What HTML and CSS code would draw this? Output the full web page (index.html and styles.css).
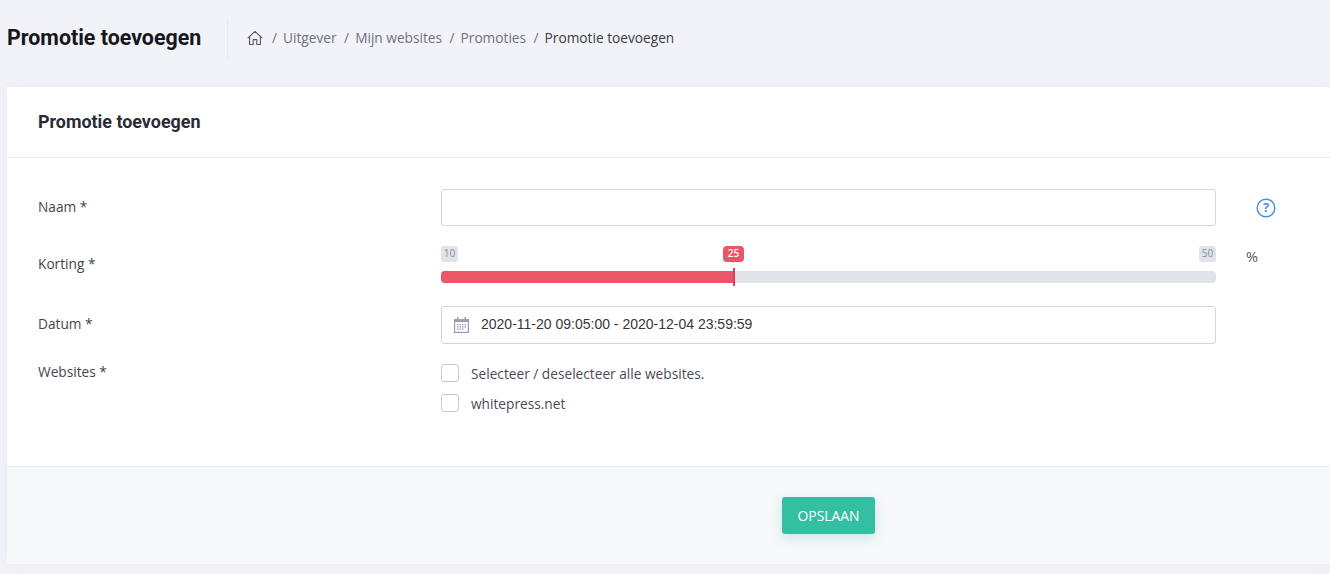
FILE: index.html
```html
<!DOCTYPE html>
<html lang="nl">
<head>
<meta charset="utf-8">
<title>Promotie toevoegen</title>
<link rel="stylesheet" href="styles.css">
</head>
<body>
<header class="subheader">
  <h1 class="page-title">Promotie toevoegen</h1>
  <nav class="crumbs">
    <svg class="home" viewBox="0 0 16 16" width="16" height="16" fill="none" stroke="#55586a" stroke-width="1.100" stroke-linejoin="round"><path d="M.8 8.200 8 1.400l7.200 6.800M2.600 6.800v7.700h3.600V9.600h3.600v4.900h3.600V6.800"/></svg>
    <span class="sep">/</span><a>Uitgever</a>
    <span class="sep">/</span><a>Mijn websites</a>
    <span class="sep">/</span><a>Promoties</a>
    <span class="sep">/</span><span class="current">Promotie toevoegen</span>
  </nav>
</header>
<main class="card">
  <div class="card-head"><h2>Promotie toevoegen</h2></div>
  <form class="card-body">
    <div class="row row-name">
      <label>Naam *</label>
      <input class="field" type="text">
      <svg class="help" viewBox="0 0 20 20" width="20" height="20" fill="none"><circle cx="10" cy="10" r="8.800" stroke="#4a90e2" stroke-width="1.500"/><text x="10" y="14.400" text-anchor="middle" class="help-q">?</text></svg>
    </div>
    <div class="row row-slider">
      <label>Korting *</label>
      <div class="slider">
        <div class="ticks"><span class="tick">10</span><span class="tick">50</span></div>
        <span class="bubble">25</span>
        <div class="track"><div class="fill" style="width:293px"></div></div>
      </div>
      <span class="unit">%</span>
    </div>
    <div class="row row-date">
      <label>Datum *</label>
      <div class="field date">
        <svg viewBox="0 0 15 16" width="15" height="16"><path fill="#9a9bb4" d="M0 2h15v14H0z"/><path fill="#fff" d="M1.200 5h12.600v9.800H1.200z"/><path fill="#9a9bb4" d="M3 0h1.500v3H3zM10.500 0H12v3h-1.500zM3 7h1.500v1.200H3zM5.500 7H7v1.200H5.500zM8 7h1.500v1.200H8zM10.500 7H12v1.200h-1.500zM3 9.300h1.500v1.200H3zM5.500 9.300H7v1.200H5.500zM8 9.300h1.500v1.200H8zM10.500 9.300H12v1.200h-1.500zM3 11.600h1.500v1.200H3zM5.500 11.600H7v1.200H5.500zM8 11.600h1.500v1.200H8z"/></svg>
        <span class="date-text">2020-11-20 09:05:00 - 2020-12-04 23:59:59</span>
      </div>
    </div>
    <div class="row row-sites">
      <label>Websites *</label>
      <div class="checks">
        <div class="check"><span class="box"></span>Selecteer / deselecteer alle websites.</div>
        <div class="check"><span class="box"></span>whitepress.net</div>
      </div>
    </div>
  </form>
  <footer class="card-foot"><button type="button" class="save">OPSLAAN</button></footer>
</main>
</body>
</html>
```
FILE: styles.css
```css
* { box-sizing: border-box; }
html, body { height: 100%; }
body {
  margin: 0;
  padding: 0 0 0 7px;
  background: #f2f3f8;
  font-family: "Open Sans", sans-serif;
  font-size: 13.700px;
  color: #3f4047;
  overflow: hidden;
}
.subheader {
  height: 87px;
  padding-bottom: 11px;
  display: flex;
  align-items: center;
}
.page-title {
  margin: 0;
  width: 221px;
  height: 40px;
  border-right: 1px solid #e7e8ef;
  font: 700 21.400px/40px Roboto, sans-serif;
  color: #16171d;
}
.crumbs {
  display: flex;
  align-items: center;
  margin-left: 19px;
  font-size: 13.700px;
  color: #6f717d;
}
.crumbs > span, .crumbs > a { position: relative; top: -1px; }
.home { margin-right: 8px; }
.sep { margin: 0 6px 0 1px; }
.crumbs a { margin-right: 6.500px; }
.current { color: #3a3b42; }
.card {
  height: 477px;
  background: #fff;
  box-shadow: 0 0 13px rgba(82, 63, 105, .05);
  display: flex;
  flex-direction: column;
}
.card-head {
  height: 71px;
  padding-left: 31px;
  border-bottom: 1px solid #ebedf2;
  display: flex;
  align-items: center;
}
.card-head h2 {
  margin: 0;
  font: 700 17.900px/20px Roboto, sans-serif;
  color: #2a2b33;
}
.card-body {
  flex: 1;
  padding: 31px 0 0 31px;
}
.row {
  display: grid;
  grid-template-columns: 403px 775px auto;
}
.row label { color: #44454d; }
.field {
  display: block;
  width: 775px;
  border: 1px solid #d5d6dc;
  border-radius: 3px;
  background: #fff;
  outline: none;
}
.row-name { height: 37px; align-items: center; }
.row-name label { margin-top: -3px; }
.row-name .field { height: 37px; }
.help { margin-left: 40px; margin-top: 1px; }
.help-q { font: 700 13px "Open Sans", sans-serif; fill: #4a90e2; }
.row-slider { height: 60px; margin-top: 20px; }
.row-slider label { padding-top: 8px; }
.slider { position: relative; }
.ticks { display: flex; justify-content: space-between; height: 16px; }
.tick {
  width: 17px;
  height: 16px;
  border-radius: 3px;
  background: #e0e3e8;
  color: #8a8d98;
  font-size: 10px;
  line-height: 15px;
  text-align: center;
}
.bubble {
  position: absolute;
  left: 282px;
  top: 0;
  width: 21px;
  height: 16px;
  border-radius: 4px;
  background: #ea5568;
  color: #fff;
  font-size: 10px;
  font-weight: 600;
  line-height: 15px;
  text-align: center;
}
.bubble::after {
  content: "";
  position: absolute;
  left: 8px;
  top: 15px;
  border: 2.500px solid transparent;
  border-top-color: #ea5568;
  border-bottom: 0;
}
.track {
  position: relative;
  height: 12px;
  margin-top: 9px;
  border-radius: 4px;
  background: #e0e3e8;
}
.fill {
  position: relative;
  height: 12px;
  border-radius: 4px 0 0 4px;
  background: #ea5568;
}
.fill::after {
  content: "";
  position: absolute;
  right: -1px;
  top: -3px;
  width: 2px;
  height: 18px;
  background: #c8475a;
}
.unit { margin: 2px 0 0 30px; font-size: 14.500px; line-height: 18px; color: #55565f; }
.row-date { height: 38px; align-items: center; }
.row-date label { margin-top: -4px; }
.date {
  height: 38px;
  padding-left: 12px;
  display: flex;
  align-items: center;
  gap: 12px;
  font: 14px/18px "Liberation Sans", sans-serif;
  color: #36373d;
}
.date-text { position: relative; top: -1px; }
.row-sites { margin-top: 20px; }
.row-sites label { line-height: 15px; }
.checks { display: flex; flex-direction: column; gap: 12px; }
.check { display: flex; align-items: center; height: 18px; gap: 12px; color: #4a4b55; }
.box {
  width: 18px;
  height: 18px;
  border: 1px solid #c9cad2;
  border-radius: 3px;
  background: #fff;
}
.card-foot {
  height: 98px;
  background: #f7f8fa;
  border-top: 1px solid #ebedf2;
  padding: 30px 0 0 775px;
}
.save {
  display: block;
  width: 93px;
  height: 37px;
  padding: 0;
  border: 0;
  border-radius: 3px;
  background: #34bfa3;
  color: #fff;
  font: 13.900px "Open Sans", sans-serif;
  box-shadow: 0 4px 12px rgba(52, 191, 163, .25);
}
```
